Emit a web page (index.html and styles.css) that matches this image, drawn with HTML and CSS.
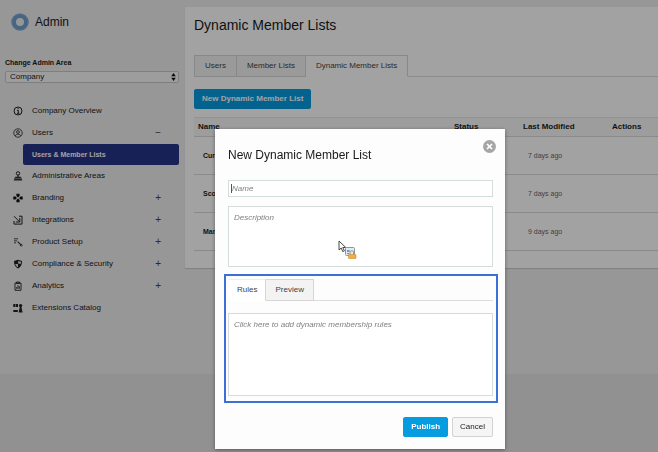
FILE: index.html
```html
<!DOCTYPE html>
<html lang="en">
<head>
    <meta charset="UTF-8">
    <meta name="viewport" content="width=device-width, initial-scale=1.0">
    <title>Dynamic Member Lists</title>
    <link rel="stylesheet" href="styles.css">
</head>
<body>

<div class="page">
    <aside class="sidebar">
        <div class="brand">
            <svg class="brand-logo" viewBox="0 0 18 18"><circle cx="9" cy="9" r="6.3" fill="none" stroke="#6da0cf" stroke-width="4.6"/><circle cx="9" cy="9" r="8" fill="none" stroke="#84b2dc" stroke-width="1.2" stroke-dasharray="2 1.2"/></svg>
            <span>Admin</span>
        </div>

        <div class="area">
            <label for="area">Change Admin Area</label>
            <div class="area-select">
                <select id="area">
                    <option>Company</option>
                </select>
                <svg class="area-arrows" viewBox="0 0 5 8"><path d="M2.5 0 4.8 3.2H.2zM2.5 8 .2 4.8h4.6z" fill="#111"/></svg>
            </div>
        </div>

        <nav>
            <ul class="menu">
                <li><a href="#">
                    <svg class="icon" viewBox="0 0 10 10"><circle cx="5" cy="5" r="4" fill="none" stroke="#222"/><path d="M4 4.3h1.3v3M4 7.3h2.4M4.6 2.5h1" fill="none" stroke="#222"/></svg>
                    <span>Company Overview</span>
                </a></li>
                <li><a href="#">
                    <svg class="icon" viewBox="0 0 10 10" fill="none" stroke="#333" stroke-width=".9"><circle cx="5" cy="5" r="4.2"/><circle cx="5" cy="4" r="1.4"/><path d="M2.3 8C2.8 5.6 7.2 5.6 7.7 8"/></svg>
                    <span>Users</span><b class="toggle">−</b>
                </a></li>
                <li class="sub"><a class="active" href="#">Users &amp; Member Lists</a></li>
                <li><a href="#">
                    <svg class="icon" viewBox="0 0 10 10"><circle cx="5" cy="2.4" r="1.7" fill="none" stroke="#222"/><path d="M4.3 4h1.4v1.8h2.2L9.3 9.5H.7l1.4-3.7h2.2z" fill="#333"/><path d="M2.4 7.6h1.2M4.5 7.6h1.2M6.6 7.6h1.2" stroke="#eee" stroke-width=".7"/></svg>
                    <span>Administrative Areas</span>
                </a></li>
                <li><a href="#">
                    <svg class="icon" viewBox="0 0 10 10" fill="#111"><path d="M3.4.8h3.2v2.2L5 4.4 3.4 3zM3.4 9.2h3.2V7L5 5.600 3.400 7zM.3 3.400v3.200h2.200L3.900 5 2.500 3.400zM9.700 3.400v3.200H7.500L6.100 5l1.400-1.600z"/></svg>
                    <span>Branding</span><b class="toggle">+</b>
                </a></li>
                <li><a href="#">
                    <svg class="icon" viewBox="0 0 10 10" fill="none" stroke="#222"><path d="M1 1.200 6.600 6.800M6.800 3v4H2.800M6 1.200h3v7.900H1V6"/></svg>
                    <span>Integrations</span><b class="toggle">+</b>
                </a></li>
                <li><a href="#">
                    <svg class="icon" viewBox="0 0 10 10" fill="none" stroke="#333" stroke-width=".9"><path d="M1 1.800h4M1 3.800h3M1 5.800h2"/><path d="M4.600 4.600 8.200 8.200" stroke-width="1.200"/><circle cx="8.200" cy="8.200" r=".9"/></svg>
                    <span>Product Setup</span><b class="toggle">+</b>
                </a></li>
                <li><a href="#">
                    <svg class="icon" viewBox="0 0 10 10"><path d="M5 .8 9 2c0 3.600-1 6-4 7.400C2 8 1 5.600 1 2z" fill="#222"/><path d="M5.200 2v2.800h2.700L8 2.800zM5 5H2.200C2.600 6.600 3.500 7.600 5 8.300z" fill="#ddd"/></svg>
                    <span>Compliance &amp; Security</span><b class="toggle">+</b>
                </a></li>
                <li><a href="#">
                    <svg class="icon" viewBox="0 0 10 10" fill="none" stroke="#222" stroke-width=".9"><path d="M2 2h6v7.300H2zM3.500 1h3v1.500h-3zM3.700 7.800V6M5 7.800V4.200M6.300 7.800V5.200"/></svg>
                    <span>Analytics</span><b class="toggle">+</b>
                </a></li>
                <li><a href="#">
                    <svg class="icon" viewBox="0 0 10 10" fill="#222"><path d="M.3 1h2.200v3H.3zM3 1h2v3H3zM.3 7h4.500v2H.3zM5.600 9.500 6.800 4h1.600l1.200 5.500z"/><circle cx="7.600" cy="2.600" r="1.700"/></svg>
                    <span>Extensions Catalog</span>
                </a></li>
            </ul>
        </nav>
    </aside>

    <main class="panel">
        <h1>Dynamic Member Lists</h1>
        <nav class="tabs">
            <a class="tab" href="#">Users</a>
            <a class="tab" href="#">Member Lists</a>
            <a class="tab current" href="#">Dynamic Member Lists</a>
        </nav>
        <button class="btn primary" type="button">New Dynamic Member List</button>
        <table class="lists">
            <colgroup>
                <col class="col-name">
                <col class="col-status">
                <col class="col-modified">
                <col>
            </colgroup>
            <thead>
                <tr><th>Name</th><th>Status</th><th>Last Modified</th><th>Actions</th></tr>
            </thead>
            <tbody>
                <tr><td class="name">Cur</td><td></td><td>7 days ago</td><td></td></tr>
                <tr><td class="name">Sco</td><td></td><td>7 days ago</td><td></td></tr>
                <tr><td class="name">Man</td><td></td><td>9 days ago</td><td></td></tr>
            </tbody>
        </table>
    </main>
</div>

<div class="overlay">
    <form class="modal" role="dialog" aria-labelledby="modal-title">
        <button class="close" type="button" aria-label="Close">
            <svg viewBox="0 0 12 12"><circle cx="6" cy="6" r="6" fill="#a6a6a6"/><path d="m3.700 3.700 4.600 4.600M8.300 3.700 3.700 8.300" stroke="#fff" stroke-width="1.600"/></svg>
        </button>
        <h2 id="modal-title">New Dynamic Member List</h2>
        <div class="name-field">
            <input type="text" placeholder="Name" aria-label="Name">
        </div>
        <textarea class="description" placeholder="Description" aria-label="Description"></textarea>

        <section class="rules">
            <div class="tabs">
                <button class="tab current" type="button">Rules</button>
                <button class="tab" type="button">Preview</button>
            </div>
            <textarea class="rules-text" placeholder="Click here to add dynamic membership rules" aria-label="Rules"></textarea>
        </section>

        <div class="actions">
            <button class="btn primary" type="submit">Publish</button>
            <button class="btn" type="button">Cancel</button>
        </div>

        <svg class="pointer" viewBox="0 0 20 21">
            <path d="M1 1v9l2.200-2 1.600 3.600 1.600-.8L4.800 7.500h3z" fill="#fff" stroke="#333" stroke-width=".9"/>
            <rect x="7.500" y="7.500" width="9" height="8" rx="1" fill="#e3eaf0" stroke="#8c959c"/>
            <path d="M9 10h2.500v2H9zM9 13h2v1H9z" fill="#5b9bd5"/>
            <path d="M12 14.500v-2.200c0-2 3.600-2 3.600 0v2.200" fill="none" stroke="#888"/>
            <rect x="10.500" y="14.500" width="7.500" height="4" rx=".6" fill="#f0b03c" stroke="#c98b2a" stroke-width=".6"/>
        </svg>
    </form>
</div>

</body>
</html>
```

FILE: styles.css
```css
* {
    box-sizing: border-box;
}

body {
    margin: 0;
    min-height: 100vh;
    background: #e5e5e5;
    color: #1a1a1a;
    font-family: "Liberation Sans", Arial, sans-serif;
    font-size: 8px;
    line-height: 12px;
    overflow: hidden;
}

button, input, select, textarea {
    font: inherit;
    color: inherit;
    margin: 0;
}

a {
    color: inherit;
    text-decoration: none;
}

h1, h2 {
    margin: 0;
    font-weight: normal;
}

.page {
    display: flex;
    align-items: flex-start;
    padding: 7px 0 55px;
    background: #eee;
}

/* Sidebar */
.sidebar {
    flex: 0 0 185px;
    padding: 6px 6px 0 5px;
}

.brand {
    display: flex;
    align-items: center;
    gap: 6px;
    padding-left: 6px;
    font-size: 12px;
    line-height: 18px;
}

.brand-logo {
    width: 18px;
    height: 18px;
}

.area {
    margin-top: 26px;
}

.area label {
    display: block;
    font-size: 7px;
    font-weight: bold;
}

.area-select {
    display: grid;
    align-items: center;
    margin-top: 2px;
}

.area-select select {
    grid-area: 1 / 1;
    appearance: none;
    width: 100%;
    height: 12px;
    padding: 0 4px;
    border: 1px solid #c8c8c8;
    border-radius: 2px;
    background: #f8f8f8;
    line-height: 10px;
}

.area-arrows {
    grid-area: 1 / 1;
    justify-self: end;
    width: 5px;
    height: 8px;
    margin-right: 3px;
    pointer-events: none;
}

.menu {
    list-style: none;
    margin: 17px 0 0;
    padding: 0;
}

.menu a {
    display: flex;
    align-items: center;
    gap: 9px;
    height: 22px;
    padding: 0 18px 0 8px;
}

.icon {
    width: 10px;
    height: 10px;
}

.toggle {
    margin-left: auto;
    color: #444;
    font-size: 10px;
    font-weight: normal;
}

.menu .sub {
    padding-left: 18px;
}

.menu .active {
    height: 21px;
    padding: 0 9px;
    border-radius: 2px;
    background: #263588;
    color: #fff;
    font-size: 7px;
    font-weight: bold;
}

/* Main panel */
.panel {
    flex: 1;
    min-width: 0;
    padding: 9px 0 17px 9px;
    background: #fff;
    box-shadow: 0 1px 1px #ccc;
}

.panel h1 {
    font-size: 14px;
    line-height: 18px;
}

.tabs {
    display: flex;
    height: 22px;
    border-bottom: 1px solid #dcdcdc;
    color: #444;
}

.panel .tabs {
    margin: 21px 0 12px;
}

.tab {
    height: 22px;
    padding: 0 10px;
    border: 1px solid #d6d6d6;
    border-left-width: 0;
    background: #f3f3f3;
    line-height: 20px;
}

.tab:first-child {
    border-left-width: 1px;
}

.tab.current {
    background: #fff;
    border-bottom-color: #fff;
}

.btn {
    height: 20px;
    padding: 0 7px;
    border: 1px solid #d2d2d2;
    border-radius: 2px;
    background: #f5f5f5;
    line-height: 18px;
}

.btn.primary {
    border-color: #069de0;
    background: #069de0;
    color: #fff;
    font-weight: bold;
}

.lists {
    width: 100%;
    margin-top: 8px;
    border-collapse: collapse;
    table-layout: fixed;
}

.col-name {
    width: 256px;
}

.col-status {
    width: 69px;
}

.col-modified {
    width: 89px;
}

.lists th {
    height: 19px;
    padding: 0 4px;
    background: #f7f7f7;
    border-top: 1px solid #e8e8e8;
    text-align: left;
}

.lists td {
    height: 38px;
    padding: 0 9px;
    border-top: 1px solid #dadada;
    border-bottom: 1px solid #dadada;
    color: #666;
    font-size: 7px;
}

.lists .name {
    color: #222;
    font-weight: bold;
}

/* Modal */
.overlay {
    position: fixed;
    inset: 0;
    display: flex;
    justify-content: center;
    align-items: flex-start;
    padding: 129px 0 0 62px;
    background: rgba(0, 0, 0, 0.365);
}

.modal {
    position: relative;
    display: flex;
    flex-direction: column;
    width: 290px;
    padding: 17px 7px 12px 9px;
    background: #fdfdfd;
    box-shadow: 0 1px 4px rgba(0, 0, 0, 0.4);
}

.modal h2 {
    margin: 0 4px 16px;
    font-size: 12px;
    line-height: 18px;
}

.close {
    position: absolute;
    top: 11px;
    right: 9px;
    width: 13px;
    height: 13px;
    padding: 0;
    border: 0;
    background: none;
}

.close svg {
    display: block;
}

.modal input, .modal textarea {
    display: block;
    width: 100%;
    border: 1px solid #d5dcdc;
    border-radius: 0;
    background: #fff;
    outline: none;
    resize: none;
}

.modal ::placeholder {
    color: #808080;
    font-style: italic;
    opacity: 1;
}

.name-field {
    position: relative;
    margin: 0 5px 9px 4px;
}

.name-field input {
    height: 17px;
    padding: 0 3px;
}

/* Text caret at the start of the empty field */
.name-field::before {
    content: "";
    position: absolute;
    left: 3px;
    top: 4px;
    width: 1px;
    height: 9px;
    background: #555;
}

.modal textarea {
    padding: 5px;
}

.modal .description {
    width: auto;
    height: 61px;
    margin: 0 5px 7px 4px;
}

.rules {
    padding: 3px 3px 5px 2px;
    border: 2px solid #3d70d6;
}

.rules .tabs {
    margin-bottom: 12px;
}

.rules .tab {
    padding: 0 9px;
}

.rules .tab.current {
    padding: 0 8px;
    border-color: #eee #d6d6d6 #fff #fff;
}

.rules .rules-text {
    height: 83px;
}

.actions {
    display: flex;
    justify-content: flex-end;
    gap: 4px;
    margin: 14px 5px 0 0;
}

/* Mouse pointer over the form */
.pointer {
    position: absolute;
    left: 123px;
    top: 111px;
    width: 20px;
    height: 21px;
}
```
